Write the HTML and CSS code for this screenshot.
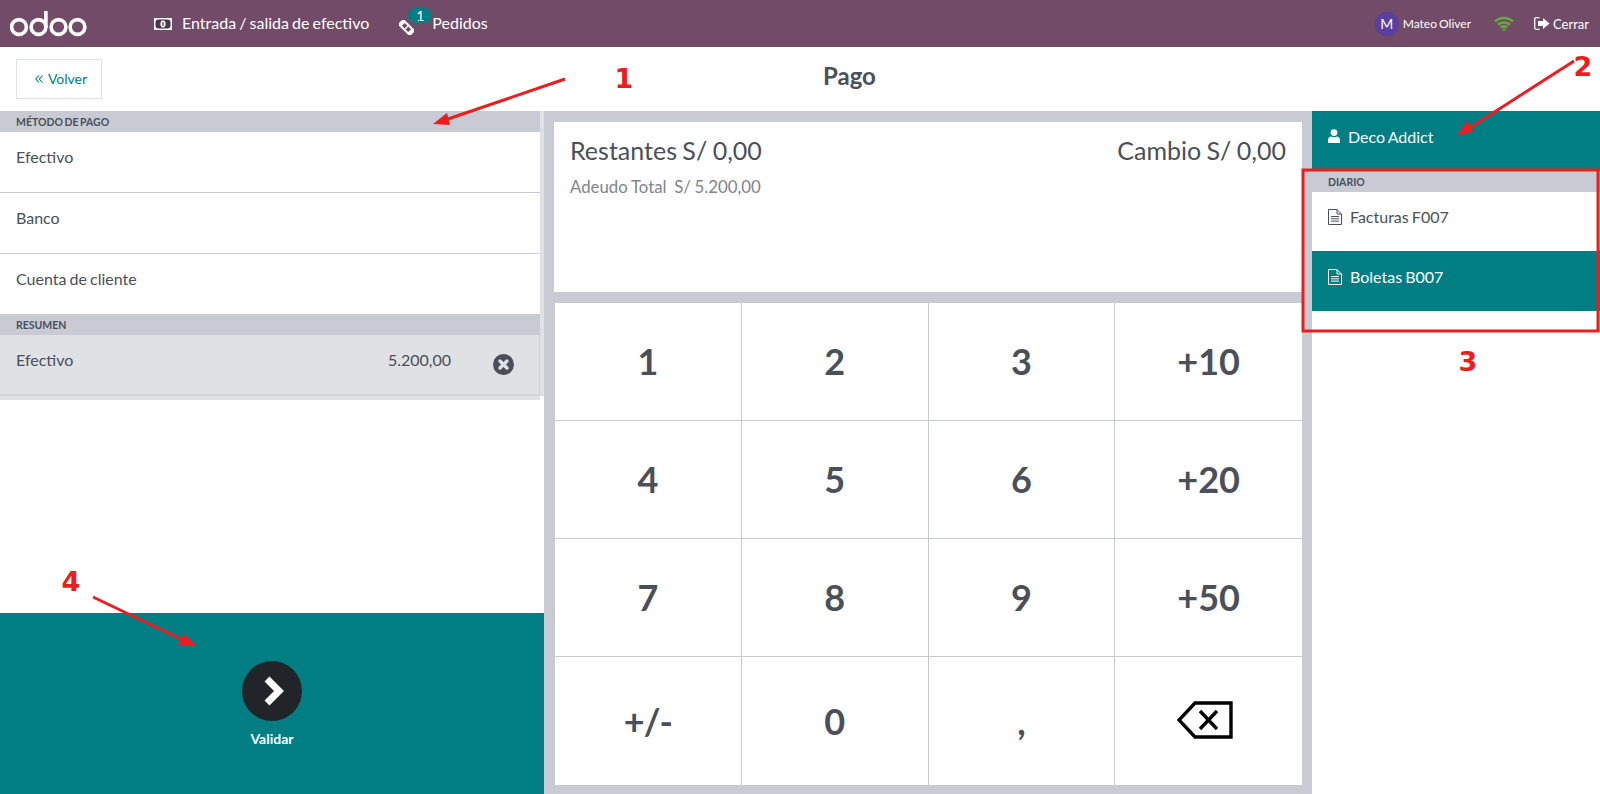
FILE: index.html
```html
<!DOCTYPE html>
<html lang="es">

<head>
    <meta charset="UTF-8" />
    <title>Pago</title>
    <link rel="stylesheet" href="styles.css">
</head>

<body>

    <!-- Barra superior -->
    <header class="topbar">
        <svg class="logo" viewBox="0 0 77 26" width="77" height="26" fill="none" stroke="#fff" stroke-width="3.600">
            <circle cx="9" cy="16" r="7.400" />
            <circle cx="28.500" cy="16" r="7.400" />
            <line x1="35.900" y1="1" x2="35.900" y2="16" stroke-linecap="round" />
            <circle cx="48.500" cy="16" r="7.400" />
            <circle cx="67.500" cy="16" r="7.400" />
        </svg>
        <div class="topbar-item cash">
            <svg width="18" height="12" viewBox="0 0 18 12">
                <rect width="18" height="12" fill="#fff" />
                <rect x="1.500" y="1.500" width="15" height="9" rx="3" fill="#4f3348" />
                <ellipse cx="9" cy="6" rx="2.600" ry="3.400" fill="#fff" />
                <rect x="8.400" y="4" width="1.200" height="4" fill="#4f3348" />
            </svg>
            <span class="label">Entrada / salida de efectivo</span>
        </div>
        <div class="topbar-item orders">
            <svg width="15" height="15" viewBox="0 0 15 15">
                <g transform="rotate(45 7.500 7.500)">
                    <rect x="-1" y="3.500" width="17" height="8" fill="#fff" />
                    <rect x="3" y="5.500" width="9" height="4" fill="#714b67" />
                    <rect x="6.800" y="5.500" width="1.400" height="4" fill="#fff" />
                </g>
            </svg>
            <span class="badge">1</span>
            <span class="label">Pedidos</span>
        </div>
        <div class="topbar-right">
            <span class="avatar">M</span>
            <span class="user-name">Mateo Oliver</span>
            <svg class="wifi" width="20" height="15" viewBox="0 0 20 15" fill="none" stroke="#66ad37" stroke-width="2.500">
                <path d="M1 5.500a13 13 0 0 1 18 0" />
                <path d="M4 8.700a9 9 0 0 1 12 0" />
                <path d="M7 11.500a4.500 4.500 0 0 1 6 0" />
                <circle cx="10" cy="13.700" r=".5" />
            </svg>
            <svg class="exit" width="16" height="13" viewBox="0 0 16 13">
                <path fill="none" stroke="#fff" stroke-width="1.300" d="M5.500 .7H2.200Q.7 .7 .7 2.200v8.600q0 1.500 1.500 1.500h3.300" />
                <path fill="#fff" d="M4 4h5V1l6.500 5.500L9 12V9H4z" />
            </svg>
            <span>Cerrar</span>
        </div>
    </header>

    <!-- Titulo de la pantalla -->
    <div class="subbar">
        <button class="back">
            <svg width="8" height="8" viewBox="0 0 8 8" fill="none" stroke="#017e84" stroke-width="1.100">
                <path d="M4 .5L.8 4 4 7.500M7.500 .5L4.300 4l3.200 3.500" />
            </svg>
            <span>Volver</span>
        </button>
        <h1>Pago</h1>
    </div>

    <main class="screen">

        <!-- Metodos de pago -->
        <section class="left">
            <div class="left-lists">
                <div class="lists">
                    <div class="section-title">MÉTODO DE PAGO</div>
                    <div class="method">Efectivo</div>
                    <div class="method">Banco</div>
                    <div class="method last">Cuenta de cliente</div>
                    <div class="section-title">RESUMEN</div>
                    <div class="method selected">
                        <span>Efectivo</span>
                        <span class="amount">5.200,00</span>
                        <svg class="remove" width="21" height="21" viewBox="0 0 21 21">
                            <circle cx="10.500" cy="10.500" r="10.500" fill="#4a4f59" />
                            <path d="M7 7l7 7M14 7l-7 7" stroke="#e0e1e5" stroke-width="3.400" stroke-linecap="round" />
                        </svg>
                    </div>
                </div>
            </div>
            <div class="validate">
                <div class="validate-circle">
                    <svg width="22" height="30" viewBox="0 0 22 30" fill="none" stroke="#fff" stroke-width="7">
                        <path d="M4 3l12 12L4 27" />
                    </svg>
                </div>
                <span class="validate-label">Validar</span>
            </div>
        </section>

        <!-- Resumen y teclado -->
        <section class="center">
            <div class="status">
                <div class="status-top">
                    <span>Restantes S/ 0,00</span>
                    <span>Cambio S/ 0,00</span>
                </div>
                <div class="status-total">Adeudo Total&nbsp; S/ 5.200,00</div>
            </div>
            <div class="numpad">
                <button>1</button>
                <button>2</button>
                <button>3</button>
                <button>+10</button>
                <button>4</button>
                <button>5</button>
                <button>6</button>
                <button>+20</button>
                <button>7</button>
                <button>8</button>
                <button>9</button>
                <button>+50</button>
                <button class="sign">+/-</button>
                <button>0</button>
                <button>,</button>
                <button class="backspace">
                    <svg width="56" height="38" viewBox="0 0 56 38" fill="none" stroke="#000" stroke-width="3.400">
                        <path d="M54 2H18L2 19l16 17h36z" />
                        <path d="M23 10l17 18M40 10L23 28" />
                    </svg>
                </button>
            </div>
        </section>

        <!-- Cliente y diario -->
        <section class="right">
            <div class="customer">
                <svg width="12" height="14" viewBox="0 0 12 14">
                    <circle cx="6" cy="3.600" r="3.400" fill="#fff" />
                    <path fill="#fff" d="M0 14v-3q0-3 3-3.500 3 1.500 6 0 3 .5 3 3.500v3z" />
                </svg>
                <span>Deco Addict</span>
            </div>
            <div class="section-title">DIARIO</div>
            <div class="journal">
                <svg width="14" height="16" viewBox="0 0 14 16" fill="none" stroke="currentColor">
                    <path d="M.5 .5h8.500l4.500 4.500v10.500H.5z" />
                    <path d="M9 .5V5h4.500M3 7.500h8M3 9.800h8M3 12.100h8" />
                </svg>
                <span>Facturas F007</span>
            </div>
            <div class="journal active">
                <svg width="14" height="16" viewBox="0 0 14 16" fill="none" stroke="currentColor">
                    <path d="M.5 .5h8.500l4.500 4.500v10.500H.5z" />
                    <path d="M9 .5V5h4.500M3 7.500h8M3 9.800h8M3 12.100h8" />
                </svg>
                <span>Boletas B007</span>
            </div>
        </section>
    </main>

    <!-- Anotaciones en rojo sobre la captura -->
    <svg class="marks" width="1600" height="794" viewBox="0 0 1600 794">
        <g stroke="#ee1c1c" stroke-width="3" fill="#ee1c1c">
            <line x1="565" y1="79" x2="445" y2="120" />
            <path stroke="none" d="M433 124l14-11 3 12z" />
            <line x1="1574" y1="61" x2="1468" y2="129" />
            <path stroke="none" d="M1457 136l10-15 7 10z" />
            <line x1="93" y1="597" x2="185" y2="641" />
            <path stroke="none" d="M197 646l-19-1 6-11z" />
        </g>
        <rect class="frame" x="1303" y="170" width="295" height="161" />
        <text x="624" y="88">1</text>
        <text x="1583" y="76">2</text>
        <text x="1468" y="371">3</text>
        <text x="71" y="591">4</text>
    </svg>

</body>

</html>
```

FILE: styles.css
```css
* {
    box-sizing: border-box;
}

body {
    margin: 0;
    height: 794px;
    overflow: hidden;
    font-family: Lato, sans-serif;
    color: #4a4f59;
    background: #fff;
    display: flex;
    flex-direction: column;
}

/* Barra superior */
.topbar {
    height: 47px;
    flex: none;
    background: #714b67;
    color: #fff;
    display: flex;
    align-items: center;
    padding-left: 10px;
    font-size: 16px;
    word-spacing: -1px;
}

.logo {
    margin-right: 67px;
}

.topbar-item {
    display: flex;
    align-items: center;
    gap: 10px;
    position: relative;
}

.label {
    margin-bottom: 2px;
}

.orders {
    margin-left: 30px;
    gap: 18px;
}

.orders svg {
    margin-top: 7px;
}

.badge {
    position: absolute;
    left: 9px;
    top: -5px;
    width: 24px;
    height: 15px;
    border-radius: 8px;
    background: #017e84;
    font-size: 14px;
    line-height: 15px;
    text-align: center;
}

.topbar-right {
    margin-left: auto;
    display: flex;
    align-items: center;
    padding-right: 11px;
    font-size: 13px;
}

.avatar {
    width: 24px;
    height: 24px;
    border-radius: 50%;
    background: #5a3ea0;
    text-align: center;
    line-height: 24px;
    font-size: 14px;
    margin-right: 4px;
}

.user-name {
    font-size: 12px;
}

.wifi {
    margin: 0 20px 0 23px;
}

.exit {
    margin-right: 3px;
}

/* Titulo */
.subbar {
    height: 64px;
    flex: none;
    display: flex;
    align-items: center;
    padding-left: 16px;
}

.back {
    width: 86px;
    height: 40px;
    margin-top: -1px;
    padding: 0 0 0 4px;
    background: #fff;
    border: 1px solid #dee2e6;
    color: #017e84;
    font: 14px Lato, sans-serif;
    display: flex;
    align-items: center;
    justify-content: center;
    gap: 5px;
}

h1 {
    margin: -8px 0 0 721px;
    font-size: 24px;
    font-weight: 700;
}

.screen {
    flex: 1;
    display: flex;
    min-height: 0;
}

.section-title {
    height: 21px;
    background: #c8cbd3;
    font-size: 10.500px;
    font-weight: 700;
    line-height: 22px;
    padding-left: 16px;
    word-spacing: -1px;
}

/* Columna izquierda */
.left {
    width: 544px;
    flex: none;
    display: flex;
    flex-direction: column;
}

.left-lists {
    flex: 1;
}

.lists {
    width: 540px;
    box-shadow: 4px 0 0 #e0e1e5, 0 4px 0 #e0e1e5;
}

.method {
    height: 61px;
    border-bottom: 1px solid #c8cbd3;
    padding: 15px 16px;
    font-size: 16px;
    word-spacing: -1px;
    display: flex;
}

.method.last {
    height: 60px;
    border-bottom: none;
}

.method.selected {
    background: #e0e1e5;
    height: 61px;
    border-bottom: 2px solid #d2d4da;
    border-right: 1px solid #cfd1d7;
}

.amount {
    margin-left: auto;
    margin-right: 42px;
}

.remove {
    margin-top: 4px;
    margin-right: 9px;
}

.validate {
    height: 181px;
    flex: none;
    background: #017e84;
    display: flex;
    flex-direction: column;
    align-items: center;
    padding-top: 48px;
    color: #fff;
}

.validate-circle {
    width: 60px;
    height: 60px;
    border-radius: 50%;
    background: #212529;
    display: flex;
    align-items: center;
    justify-content: center;
    padding-left: 4px;
}

.validate-label {
    margin-top: 9px;
    font-size: 14px;
    font-weight: 700;
}

/* Columna central */
.center {
    width: 768px;
    flex: none;
    background: #c8cbd3;
    padding: 11px 10px 9px;
    display: flex;
    flex-direction: column;
    gap: 11px;
}

.status {
    height: 170px;
    flex: none;
    background: #fff;
    padding: 13px 16px;
}

.status-top {
    display: flex;
    justify-content: space-between;
    font-size: 25px;
    word-spacing: -1px;
}

.status-total {
    margin-top: 11px;
    font-size: 16.800px;
    word-spacing: -.5px;
    color: #80848f;
}

.numpad {
    flex: 1;
    margin-left: 1px;
    display: grid;
    grid-template-columns: repeat(4, 1fr);
    grid-template-rows: 118px 118px 118px 1fr;
    background: #fff;
}

.numpad button {
    background: #fff;
    border: none;
    border-right: 1px solid #c8cbd3;
    border-bottom: 1px solid #c8cbd3;
    color: #4a4f59;
    font: 700 36px Lato, sans-serif;
    padding: 0 0 2px;
}

.numpad button:nth-child(4n) {
    border-right: none;
}

.numpad button:nth-child(n+13) {
    border-bottom: none;
    padding: 0;
}

.numpad .sign {
    letter-spacing: -1px;
}

.numpad button.backspace {
    padding: 0 8px 2px 0;
}

.numpad svg {
    display: block;
    margin: 0 auto;
}

/* Columna derecha */
.right {
    flex: 1;
    display: flex;
    flex-direction: column;
}

.customer {
    height: 60px;
    background: #017e84;
    color: #fff;
    display: flex;
    align-items: center;
    gap: 8px;
    padding: 0 0 10px 16px;
    font-size: 16px;
    word-spacing: -1px;
}

.journal {
    height: 59px;
    display: flex;
    align-items: center;
    gap: 8px;
    padding: 0 0 11px 16px;
    font-size: 16px;
    word-spacing: -1px;
}

.journal svg {
    margin-top: 2px;
}

.journal.active {
    height: 60px;
    padding-bottom: 10px;
    background: #017e84;
    color: #fff;
}

/* Anotaciones */
.marks {
    position: absolute;
    left: 0;
    top: 0;
    pointer-events: none;
}

.frame {
    fill: none;
    stroke: #ee1c1c;
    stroke-width: 3;
}

.marks text {
    font: 700 27px "DejaVu Sans", sans-serif;
    fill: #ee1c1c;
    text-anchor: middle;
}
```
